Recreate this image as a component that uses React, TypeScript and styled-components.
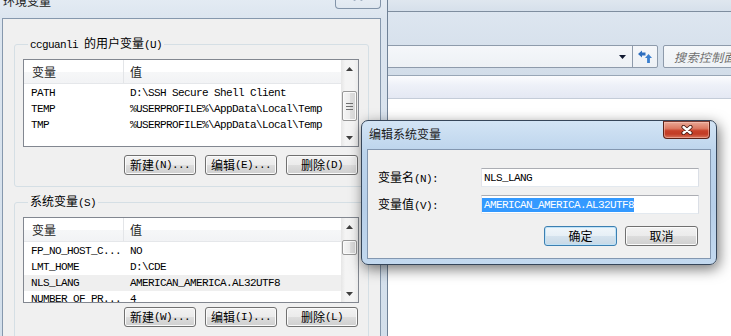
import React from "react";
import styled, { createGlobalStyle } from "styled-components";

const GlobalStyle = createGlobalStyle`
  html, body { margin: 0; padding: 0; background: #ffffff; }
  body { width: 731px; height: 336px; overflow: hidden; }
  * { box-sizing: border-box; }
`;

const Desktop = styled.div`
  position: relative;
  width: 731px;
  height: 336px;
  overflow: hidden;
  background: #ffffff;
  font-family: "Liberation Mono", "Noto Sans CJK SC", monospace;
  font-size: 11px;
  letter-spacing: -0.6px;
  color: #000;
`;

const Han = styled.span`
  font-family: "Noto Sans CJK SC", "Noto Sans", sans-serif;
  font-size: 12px;
  letter-spacing: 0;
`;

const HAN_RE = /([\u3400-\u9fff]+)/;
const Mixed = ({ t }: { t: string }) => (
  <>
    {t.split(HAN_RE).map((part, i) =>
      part === "" ? null : HAN_RE.test(part) ? (
        <Han key={i}>{part}</Han>
      ) : (
        <React.Fragment key={i}>{part}</React.Fragment>
      )
    )}
  </>
);

/* ---------------- background explorer window ---------------- */
const Explorer = styled.section`
  position: absolute;
  left: 380px;
  top: 0;
  width: 360px;
  height: 336px;
  display: flex;
  flex-direction: column;
  background: #ffffff;
`;
const ExTop = styled.div`
  height: 12px;
  flex-shrink: 0;
  background: linear-gradient(#dfe7ef, #d6e0eb);
  border-bottom: 1px solid #7f8e9f;
`;
const ExNav = styled.div`
  height: 64px;
  flex-shrink: 0;
  background: linear-gradient(#dde6f0, #d2dde9);
  border-bottom: 1px solid #98a6b6;
  display: flex;
  align-items: flex-start;
  padding-top: 33px;
  gap: 5px;
`;
const Address = styled.div`
  width: 278px;
  height: 23px;
  flex-shrink: 0;
  border: 1px solid #8e9bab;
  border-radius: 2px;
  background: linear-gradient(#f5f7fa, #edf1f5);
  display: flex;
  justify-content: flex-end;
`;
const DropZone = styled.div`
  width: 20px;
  display: flex;
  align-items: center;
  justify-content: center;
`;
const RefreshZone = styled.div`
  width: 25px;
  border-left: 1px solid #8e9bab;
  display: flex;
  align-items: center;
  justify-content: center;
`;
const Search = styled.div`
  width: 100px;
  height: 23px;
  flex-shrink: 0;
  border: 1px solid #8e9bab;
  border-radius: 2px;
  background: linear-gradient(#f6f8fa, #eef2f6);
  display: flex;
  align-items: center;
  padding-left: 10px;
  white-space: nowrap;
  overflow: hidden;
  color: #6f6f6f;
  font-style: italic;
  font-family: "Noto Sans CJK SC", sans-serif;
  font-size: 12px;
  letter-spacing: 0.4px;
`;
const ExBand = styled.div`
  height: 23px;
  flex-shrink: 0;
  background: linear-gradient(#fbfcfe 0%, #eef1f8 40%, #e4e8f3 100%);
  border-bottom: 1px solid #c4ccd8;
`;
const ExContent = styled.div`
  flex: 1;
  background: #ffffff;
`;

/* ---------------- shared window parts ---------------- */
const Button = styled.button<{ $default?: boolean; $w: number }>`
  width: ${(p) => p.$w}px;
  height: 20px;
  padding: 0;
  margin: 0;
  font: inherit;
  letter-spacing: inherit;
  color: #000;
  border: 1px solid ${(p) => (p.$default ? "#3c7fb1" : "#707070")};
  border-radius: 3px;
  background: ${(p) =>
    p.$default
      ? "linear-gradient(#f0f6fa 0%, #e6eff6 50%, #d5e3ee 51%, #c7d8e6 100%)"
      : "linear-gradient(#f2f2f2 0%, #ebebeb 50%, #dddddd 51%, #cfcfcf 100%)"};
  box-shadow: inset 0 0 0 1px ${(p) => (p.$default ? "#bfe2f7" : "#fbfbfb")};
  display: flex;
  align-items: center;
  justify-content: center;
  line-height: 16px;
`;
const ButtonRow = styled.div<{ $mt: number; $gap: number }>`
  margin-top: ${(p) => p.$mt}px;
  display: flex;
  justify-content: flex-end;
  gap: ${(p) => p.$gap}px;
  padding-right: 1px;
`;

/* ---------------- environment variables dialog ---------------- */
const EnvWin = styled.section`
  position: absolute;
  left: -5px;
  top: -12px;
  width: 393px;
  height: 360px;
  border: 1px solid #6f8196;
  border-radius: 7px 7px 0 0;
  background: linear-gradient(180deg, #e7eef5 0px, #dce5ef 30px, #d3dfeb 100%);
  padding: 0 6px;
  display: flex;
  flex-direction: column;
`;
const EnvTitleBar = styled.div`
  height: 29px;
  flex-shrink: 0;
  display: flex;
  align-items: flex-start;
`;
const WinTitle = styled.div<{ $mt: number; $ml: number }>`
  margin-top: ${(p) => p.$mt}px;
  margin-left: ${(p) => p.$ml}px;
  font-family: "Noto Sans CJK SC", sans-serif;
  font-size: 12px;
  line-height: 16px;
  letter-spacing: 0;
  color: #1b1b1b;
`;
const InactiveClose = styled.div`
  margin-left: auto;
  width: 46px;
  height: 20px;
  border: 1px solid #8294a9;
  border-top: none;
  border-radius: 0 0 4px 4px;
  background: linear-gradient(#eef3f8, #dfe7f0);
  display: flex;
  align-items: flex-start;
  justify-content: center;
  padding-top: 2px;
`;
const EnvClient = styled.div`
  flex: 1;
  background: #f0f0f0;
  border: 1px solid #8698ad;
  border-bottom: none;
  padding: 17px 11px 0 11px;
  display: flex;
  flex-direction: column;
  gap: 7px;
`;
const Group = styled.fieldset<{ $pb: number }>`
  margin: 0;
  min-width: 0;
  border: 1px solid #d5dfe5;
  border-radius: 3px;
  padding: 7px 9px ${(p) => p.$pb}px 8px;
  display: flex;
  flex-direction: column;
`;
const Legend = styled.legend`
  margin-left: 5px;
  padding: 0 2px;
  line-height: 14px;
`;

const ListBox = styled.div<{ $h: number }>`
  height: ${(p) => p.$h}px;
  border: 1px solid #828790;
  background: #ffffff;
  display: flex;
  overflow: hidden;
  flex-shrink: 0;
`;
const Cols = styled.div`
  flex: 1;
  min-width: 0;
  display: flex;
  flex-direction: column;
`;
const Header = styled.div`
  height: 24px;
  flex-shrink: 0;
  display: grid;
  grid-template-columns: 100px 1fr;
  background: linear-gradient(#ffffff 0%, #ffffff 50%, #f6f7f8 51%, #f2f3f5 100%);
  border-bottom: 1px solid #e5e7ea;
`;
const HeadCell = styled.div<{ $first?: boolean }>`
  display: flex;
  align-items: center;
  padding-left: ${(p) => (p.$first ? 8 : 6)}px;
  border-right: ${(p) => (p.$first ? "1px solid #e3e5e8" : "none")};
  font-family: "Noto Sans CJK SC", sans-serif;
  font-size: 12px;
  letter-spacing: 0;
  color: #1e1e1e;
`;
const Body = styled.div`
  padding-top: 1px;
  display: flex;
  flex-direction: column;
`;
const Row = styled.div<{ $sel?: boolean }>`
  height: 16px;
  flex-shrink: 0;
  display: grid;
  grid-template-columns: 100px 1fr;
  line-height: 16px;
  background: ${(p) => (p.$sel ? "#efefef" : "transparent")};
  white-space: nowrap;
`;
const Cell = styled.div<{ $first?: boolean }>`
  padding-left: ${(p) => (p.$first ? 7 : 6)}px;
  overflow: hidden;
`;

const VScroll = styled.div`
  width: 17px;
  flex-shrink: 0;
  display: flex;
  flex-direction: column;
  background: linear-gradient(90deg, #e6e6e6 0%, #f4f4f4 25%, #f4f4f4 75%, #ebebeb 100%);
`;
const ScrollArrow = styled.div`
  height: 17px;
  flex-shrink: 0;
  display: flex;
  align-items: center;
  justify-content: center;
`;
const Track = styled.div`
  flex: 1;
  display: flex;
  flex-direction: column;
  align-items: center;
`;
const Thumb = styled.div<{ $top: number; $h: number }>`
  margin-top: ${(p) => p.$top}px;
  height: ${(p) => p.$h}px;
  width: 15px;
  border: 1px solid #979797;
  border-radius: 2px;
  background: linear-gradient(90deg, #f5f5f5 0%, #ececec 50%, #dedede 51%, #d6d6d6 100%);
  box-shadow: inset 0 0 0 1px #fafafa;
  display: flex;
  align-items: center;
  justify-content: center;
`;

const UpTri = () => (
  <svg width="7" height="4" viewBox="0 0 7 4">
    <path d="M0 4 L3.5 0 L7 4 Z" fill="#3f3f3f" />
  </svg>
);
const DownTri = ({ color = "#3f3f3f" }: { color?: string }) => (
  <svg width="7" height="4" viewBox="0 0 7 4">
    <path d="M0 0 L7 0 L3.5 4 Z" fill={color} />
  </svg>
);
const Grip = () => (
  <svg width="7" height="7" viewBox="0 0 7 7">
    <path d="M0 0.5 H7 M0 3.5 H7 M0 6.5 H7" stroke="#6f6f6f" strokeWidth="1" />
  </svg>
);

type Var = { name: string; value: string; sel?: boolean };

const VarList = ({
  height,
  rows,
  thumbTop,
  thumbH,
  grip,
}: {
  height: number;
  rows: Var[];
  thumbTop: number;
  thumbH: number;
  grip?: boolean;
}) => (
  <ListBox $h={height}>
    <Cols>
      <Header>
        <HeadCell $first>变量</HeadCell>
        <HeadCell>值</HeadCell>
      </Header>
      <Body>
        {rows.map((r) => (
          <Row key={r.name} $sel={r.sel}>
            <Cell $first>{r.name}</Cell>
            <Cell>{r.value}</Cell>
          </Row>
        ))}
      </Body>
    </Cols>
    <VScroll>
      <ScrollArrow>
        <UpTri />
      </ScrollArrow>
      <Track>
        <Thumb $top={thumbTop} $h={thumbH}>
          {grip ? <Grip /> : null}
        </Thumb>
      </Track>
      <ScrollArrow>
        <DownTri />
      </ScrollArrow>
    </VScroll>
  </ListBox>
);

const userVars: Var[] = [
  { name: "PATH", value: "D:\\SSH Secure Shell Client" },
  { name: "TEMP", value: "%USERPROFILE%\\AppData\\Local\\Temp" },
  { name: "TMP", value: "%USERPROFILE%\\AppData\\Local\\Temp" },
];
const sysVars: Var[] = [
  { name: "FP_NO_HOST_C...", value: "NO" },
  { name: "LMT_HOME", value: "D:\\CDE" },
  { name: "NLS_LANG", value: "AMERICAN_AMERICA.AL32UTF8", sel: true },
  { name: "NUMBER_OF_PR...", value: "4" },
];

/* ---------------- edit dialog ---------------- */
const EditWin = styled.section`
  position: absolute;
  left: 361px;
  top: 120px;
  width: 356px;
  height: 145px;
  border: 1px solid #36465a;
  border-radius: 7px;
  background: linear-gradient(180deg, #d3e4f5 0%, #bcd4ec 22%, #b7cfe9 60%, #c3d9ef 100%);
  box-shadow: 2px 4px 14px rgba(0, 0, 0, 0.55);
  padding: 0 5px 5px 5px;
  display: flex;
  flex-direction: column;
`;
const EditTitleBar = styled.div`
  height: 28px;
  flex-shrink: 0;
  display: flex;
  align-items: flex-start;
`;
const RedClose = styled.div`
  margin-left: auto;
  margin-right: 1px;
  width: 47px;
  height: 18px;
  border: 1px solid #5b2218;
  border-top-color: #7a3a30;
  border-radius: 0 0 4px 4px;
  background: linear-gradient(#e9a896 0%, #dc7a63 40%, #c7412a 55%, #c23c25 75%, #d8745c 100%);
  box-shadow: inset 0 0 0 1px rgba(255, 210, 200, 0.45);
  display: flex;
  align-items: center;
  justify-content: center;
`;
const EditClient = styled.div`
  flex: 1;
  background: #f0f0f0;
  border: 1px solid #8397b0;
  padding: 18px 11px 0 10px;
  display: flex;
  flex-direction: column;
`;
const Form = styled.div`
  display: grid;
  grid-template-columns: 103px 218px;
  row-gap: 8px;
  align-items: center;
`;
const Label = styled.div`
  line-height: 16px;
  white-space: nowrap;
`;
const TextBox = styled.div`
  height: 19px;
  background: #ffffff;
  border: 1px solid;
  border-color: #abadb3 #dbdfe6 #e3e9ef #e2e3ea;
  display: flex;
  align-items: center;
  white-space: nowrap;
`;
const Value = styled.span<{ $selected?: boolean }>`
  display: inline-block;
  line-height: 14px;
  padding-left: 2px;
  background: ${(p) => (p.$selected ? "#3399ff" : "transparent")};
  color: ${(p) => (p.$selected ? "#ffffff" : "#000000")};
`;

const CloseX = ({ light }: { light?: boolean }) => (
  <svg width="12" height="10" viewBox="-6 -5 12 10">
    <path
      d="M-3.5 -3 L3.5 3 M3.5 -3 L-3.5 3"
      stroke={light ? "#8b9bb0" : "#4a1a12"}
      strokeWidth={light ? 3.4 : 4.2}
      strokeLinecap="round"
    />
    <path
      d="M-3.5 -3 L3.5 3 M3.5 -3 L-3.5 3"
      stroke={light ? "#eef2f7" : "#ffffff"}
      strokeWidth={light ? 1.8 : 2.4}
      strokeLinecap="round"
    />
  </svg>
);

const RefreshIcon = () => (
  <svg width="16" height="14" viewBox="0 0 16 14">
    <path d="M1 4 L5 0.5 L5 2.6 L8.5 2.6 L8.5 5.4 L5 5.4 L5 7.5 Z" fill="#2f6fbf" />
    <path d="M11.5 4 L15 8 L12.9 8 L12.9 13 L10.1 13 L10.1 8 L8 8 Z" fill="#3a7fcf" />
  </svg>
);

export default function App() {
  return (
    <Desktop>
      <GlobalStyle />
      <Explorer>
        <ExTop />
        <ExNav>
          <Address>
            <DropZone>
              <DownTri color="#101830" />
            </DropZone>
            <RefreshZone>
              <RefreshIcon />
            </RefreshZone>
          </Address>
          <Search>搜索控制面板</Search>
        </ExNav>
        <ExBand />
        <ExContent />
      </Explorer>

      <EnvWin>
        <EnvTitleBar>
          <WinTitle $mt={4} $ml={1}>环境变量</WinTitle>
          <InactiveClose>
            <CloseX light />
          </InactiveClose>
        </EnvTitleBar>
        <EnvClient>
          <Group $pb={11}>
            <Legend>
              <Mixed t="ccguanli 的用户变量(U)" />
            </Legend>
            <VarList height={88} rows={userVars} thumbTop={14} thumbH={30} grip />
            <ButtonRow $mt={8} $gap={9}>
              <Button $w={72}>
                <Mixed t="新建(N)..." />
              </Button>
              <Button $w={72}>
                <Mixed t="编辑(E)..." />
              </Button>
              <Button $w={72}>
                <Mixed t="删除(D)" />
              </Button>
            </ButtonRow>
          </Group>
          <Group $pb={16}>
            <Legend>
              <Mixed t="系统变量(S)" />
            </Legend>
            <VarList height={86} rows={sysVars} thumbTop={5} thumbH={15} />
            <ButtonRow $mt={4} $gap={9}>
              <Button $w={72}>
                <Mixed t="新建(W)..." />
              </Button>
              <Button $w={72}>
                <Mixed t="编辑(I)..." />
              </Button>
              <Button $w={72}>
                <Mixed t="删除(L)" />
              </Button>
            </ButtonRow>
          </Group>
        </EnvClient>
      </EnvWin>

      <EditWin>
        <EditTitleBar>
          <WinTitle $mt={5} $ml={2}>编辑系统变量</WinTitle>
          <RedClose>
            <CloseX />
          </RedClose>
        </EditTitleBar>
        <EditClient>
          <Form>
            <Label>
              <Mixed t="变量名(N):" />
            </Label>
            <TextBox>
              <Value>NLS_LANG</Value>
            </TextBox>
            <Label>
              <Mixed t="变量值(V):" />
            </Label>
            <TextBox>
              <Value $selected>AMERICAN_AMERICA.AL32UTF8</Value>
            </TextBox>
          </Form>
          <ButtonRow $mt={12} $gap={8}>
            <Button $w={73} $default>
              <Mixed t="确定" />
            </Button>
            <Button $w={73}>
              <Mixed t="取消" />
            </Button>
          </ButtonRow>
        </EditClient>
      </EditWin>
    </Desktop>
  );
}
